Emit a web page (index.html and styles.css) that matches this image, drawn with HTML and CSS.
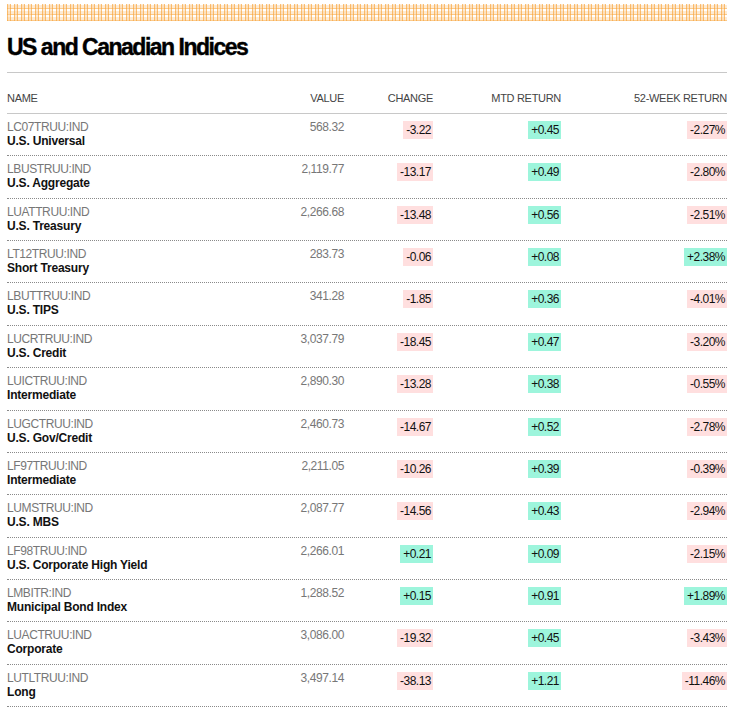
FILE: index.html
```html
<!DOCTYPE html>
<html>
<head>
<meta charset="utf-8">
<link rel="stylesheet" href="styles.css">
</head>
<body>
<div class="page">
  <div class="stripe"></div>
  <h1 class="title">US and Canadian Indices</h1>
  <div class="table">
    <div class="row head">
      <div class="c name">NAME</div>
      <div class="c num">VALUE</div>
      <div class="c num">CHANGE</div>
      <div class="c num">MTD RETURN</div>
      <div class="c num">52-WEEK RETURN</div>
    </div>
    <div class="row"><div class="c name"><div class="code">LC07TRUU:IND</div><div class="label">U.S. Universal</div></div><div class="c num val">568.32</div><div class="c num"><span class="b neg">-3.22</span></div><div class="c num"><span class="b pos">+0.45</span></div><div class="c num"><span class="b neg">-2.27%</span></div></div>
    <div class="row"><div class="c name"><div class="code">LBUSTRUU:IND</div><div class="label">U.S. Aggregate</div></div><div class="c num val">2,119.77</div><div class="c num"><span class="b neg">-13.17</span></div><div class="c num"><span class="b pos">+0.49</span></div><div class="c num"><span class="b neg">-2.80%</span></div></div>
    <div class="row"><div class="c name"><div class="code">LUATTRUU:IND</div><div class="label">U.S. Treasury</div></div><div class="c num val">2,266.68</div><div class="c num"><span class="b neg">-13.48</span></div><div class="c num"><span class="b pos">+0.56</span></div><div class="c num"><span class="b neg">-2.51%</span></div></div>
    <div class="row"><div class="c name"><div class="code">LT12TRUU:IND</div><div class="label">Short Treasury</div></div><div class="c num val">283.73</div><div class="c num"><span class="b neg">-0.06</span></div><div class="c num"><span class="b pos">+0.08</span></div><div class="c num"><span class="b pos">+2.38%</span></div></div>
    <div class="row"><div class="c name"><div class="code">LBUTTRUU:IND</div><div class="label">U.S. TIPS</div></div><div class="c num val">341.28</div><div class="c num"><span class="b neg">-1.85</span></div><div class="c num"><span class="b pos">+0.36</span></div><div class="c num"><span class="b neg">-4.01%</span></div></div>
    <div class="row"><div class="c name"><div class="code">LUCRTRUU:IND</div><div class="label">U.S. Credit</div></div><div class="c num val">3,037.79</div><div class="c num"><span class="b neg">-18.45</span></div><div class="c num"><span class="b pos">+0.47</span></div><div class="c num"><span class="b neg">-3.20%</span></div></div>
    <div class="row"><div class="c name"><div class="code">LUICTRUU:IND</div><div class="label">Intermediate</div></div><div class="c num val">2,890.30</div><div class="c num"><span class="b neg">-13.28</span></div><div class="c num"><span class="b pos">+0.38</span></div><div class="c num"><span class="b neg">-0.55%</span></div></div>
    <div class="row"><div class="c name"><div class="code">LUGCTRUU:IND</div><div class="label">U.S. Gov/Credit</div></div><div class="c num val">2,460.73</div><div class="c num"><span class="b neg">-14.67</span></div><div class="c num"><span class="b pos">+0.52</span></div><div class="c num"><span class="b neg">-2.78%</span></div></div>
    <div class="row"><div class="c name"><div class="code">LF97TRUU:IND</div><div class="label">Intermediate</div></div><div class="c num val">2,211.05</div><div class="c num"><span class="b neg">-10.26</span></div><div class="c num"><span class="b pos">+0.39</span></div><div class="c num"><span class="b neg">-0.39%</span></div></div>
    <div class="row"><div class="c name"><div class="code">LUMSTRUU:IND</div><div class="label">U.S. MBS</div></div><div class="c num val">2,087.77</div><div class="c num"><span class="b neg">-14.56</span></div><div class="c num"><span class="b pos">+0.43</span></div><div class="c num"><span class="b neg">-2.94%</span></div></div>
    <div class="row"><div class="c name"><div class="code">LF98TRUU:IND</div><div class="label">U.S. Corporate High Yield</div></div><div class="c num val">2,266.01</div><div class="c num"><span class="b pos">+0.21</span></div><div class="c num"><span class="b pos">+0.09</span></div><div class="c num"><span class="b neg">-2.15%</span></div></div>
    <div class="row"><div class="c name"><div class="code">LMBITR:IND</div><div class="label">Municipal Bond Index</div></div><div class="c num val">1,288.52</div><div class="c num"><span class="b pos">+0.15</span></div><div class="c num"><span class="b pos">+0.91</span></div><div class="c num"><span class="b pos">+1.89%</span></div></div>
    <div class="row"><div class="c name"><div class="code">LUACTRUU:IND</div><div class="label">Corporate</div></div><div class="c num val">3,086.00</div><div class="c num"><span class="b neg">-19.32</span></div><div class="c num"><span class="b pos">+0.45</span></div><div class="c num"><span class="b neg">-3.43%</span></div></div>
    <div class="row"><div class="c name"><div class="code">LUTLTRUU:IND</div><div class="label">Long</div></div><div class="c num val">3,497.14</div><div class="c num"><span class="b neg">-38.13</span></div><div class="c num"><span class="b pos">+1.21</span></div><div class="c num"><span class="b neg">-11.46%</span></div></div>
  </div>
</div>
</body>
</html>
```
FILE: styles.css
```css
* { box-sizing: border-box; }
body {
  margin: 0;
  background: #fff;
  font-family: "Liberation Sans", Arial, sans-serif;
  color: #000;
}
.page {
  width: 720px;
  margin-left: 7px;
  padding-top: 4px;
}
.stripe {
  height: 17px;
  background-color: #ffffff;
  background-image:
    repeating-linear-gradient(90deg, rgba(248,165,60,0.7) 0 1px, rgba(252,210,160,0.45) 1px 3px, rgba(248,165,60,0.7) 3px 4px, transparent 4px 7px),
    repeating-linear-gradient(0deg, rgba(248,165,60,0.6) 0 1px, rgba(252,215,170,0.5) 1px 4px, transparent 4px 6px);
}
.title {
  margin: 0;
  padding: 13px 0 0;
  height: 52px;
  font-size: 23px;
  line-height: 27px;
  font-weight: 700;
  letter-spacing: -1.5px;
  -webkit-text-stroke: 0.4px #000;
  border-bottom: 1px solid #c8c8c8;
}
.row {
  display: grid;
  grid-template-columns: 1fr 84px 89px 128px 166px;
  border-bottom: 1px dotted #8a8a8a;
  padding: 6px 0 7.36px;
}
.row.head {
  padding: 19px 0 8px;
  border-bottom: 1px solid #c8c8c8;
  font-size: 11px;
  line-height: 13px;
  color: #444;
  letter-spacing: -0.3px;
}
.num { text-align: right; }
.code {
  font-size: 12px;
  line-height: 14px;
  color: #777;
  letter-spacing: -0.4px;
}
.label {
  font-size: 12px;
  line-height: 14px;
  font-weight: 700;
  color: #111;
  letter-spacing: -0.2px;
}
.val {
  font-size: 12px;
  line-height: 14px;
  color: #777;
  letter-spacing: -0.4px;
}
.b {
  display: inline-block;
  font-size: 12px;
  line-height: 14px;
  padding: 2px 2px 2px 3px;
  margin-top: -1px;
  color: #111;
  letter-spacing: -0.5px;
}
.neg { background: #ffdfdf; }
.pos { background: #9df5dc; }
```
